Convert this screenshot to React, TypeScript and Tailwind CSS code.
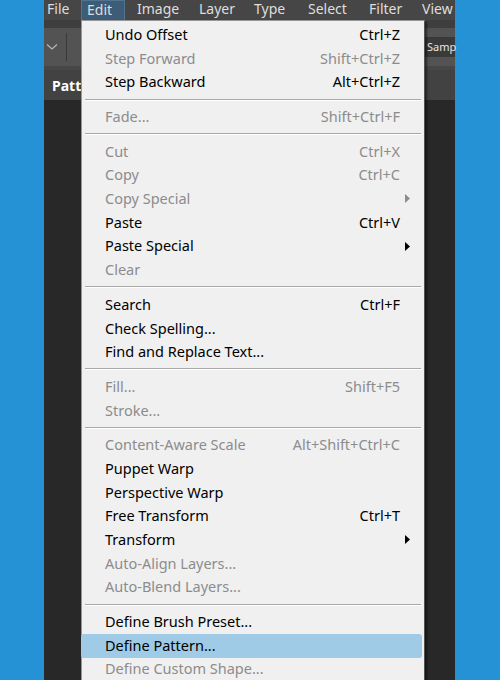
import React from "react";

type Item = {
  label?: string;
  shortcut?: string;
  disabled?: boolean;
  submenu?: boolean;
  active?: boolean;
  sep?: boolean;
};

const items: Item[] = [
  { label: "Undo Offset", shortcut: "Ctrl+Z" },
  { label: "Step Forward", shortcut: "Shift+Ctrl+Z", disabled: true },
  { label: "Step Backward", shortcut: "Alt+Ctrl+Z" },
  { sep: true },
  { label: "Fade...", shortcut: "Shift+Ctrl+F", disabled: true },
  { sep: true },
  { label: "Cut", shortcut: "Ctrl+X", disabled: true },
  { label: "Copy", shortcut: "Ctrl+C", disabled: true },
  { label: "Copy Special", disabled: true, submenu: true },
  { label: "Paste", shortcut: "Ctrl+V" },
  { label: "Paste Special", submenu: true },
  { label: "Clear", disabled: true },
  { sep: true },
  { label: "Search", shortcut: "Ctrl+F" },
  { label: "Check Spelling..." },
  { label: "Find and Replace Text..." },
  { sep: true },
  { label: "Fill...", shortcut: "Shift+F5", disabled: true },
  { label: "Stroke...", disabled: true },
  { sep: true },
  { label: "Content-Aware Scale", shortcut: "Alt+Shift+Ctrl+C", disabled: true },
  { label: "Puppet Warp" },
  { label: "Perspective Warp" },
  { label: "Free Transform", shortcut: "Ctrl+T" },
  { label: "Transform", submenu: true },
  { label: "Auto-Align Layers...", disabled: true },
  { label: "Auto-Blend Layers...", disabled: true },
  { sep: true },
  { label: "Define Brush Preset..." },
  { label: "Define Pattern...", active: true },
  { label: "Define Custom Shape...", disabled: true },
];

const topMenu = [
  { name: "File", cls: "w-[37px] pl-[3px]" },
  { name: "Edit", cls: "w-[44px] pl-[5px] bg-[#3d5c78] border border-[#4f7391] border-b-0" },
  { name: "Image", cls: "w-[62px] pl-[12px]" },
  { name: "Layer", cls: "w-[55px] pl-[12px]" },
  { name: "Type", cls: "w-[54px] pl-[12px]" },
  { name: "Select", cls: "w-[61px] pl-[12px]" },
  { name: "Filter", cls: "w-[53px] pl-[12px]" },
  { name: "View", cls: "w-[45px] pl-[12px]" },
];

const Arrow = ({ disabled }: { disabled?: boolean }) => (
  <svg width="5" height="9" viewBox="0 0 5 9" className="absolute right-[14px] top-[7px]">
    <path d="M0 0 L5 4.5 L0 9 Z" fill={disabled ? "#8c8c8c" : "#000"} />
  </svg>
);

export default function App() {
  return (
    <div
      className="relative w-[500px] h-[680px] bg-[#2592d6] flex overflow-hidden"
      style={{ fontFamily: '"Noto Sans", "Open Sans", sans-serif' }}
    >
      <div className="ml-[44px] w-[411px] h-full flex flex-col bg-[#282828]">
        {/* menu bar */}
        <div className="h-[20px] bg-[#464646] flex text-[14px] text-[#dedede] leading-[18px] whitespace-nowrap">
          {topMenu.map((m) => (
            <div key={m.name} className={`${m.cls} h-[20px] shrink-0`}>
              {m.name}
            </div>
          ))}
        </div>
        {/* options bar */}
        <div className="h-[8px] bg-[#3e3e3e]" />
        <div className="h-[38px] bg-[#535353] flex items-center">
          <svg width="12" height="8" viewBox="0 0 12 8" className="ml-[2px]">
            <path d="M1 1.5 L6 6 L11 1.5" stroke="#b5b5b5" strokeWidth="1.3" fill="none" />
          </svg>
          <div className="ml-[8px] w-px h-[28px] bg-[#3a3a3a]" />
          <div className="ml-auto w-[30px] h-[20px] bg-[#3a3a3a] text-[11px] text-[#e6e6e6] leading-[20px] pl-[2px] whitespace-nowrap">
            Samp
          </div>
        </div>
        <div className="h-[4px] bg-[#474747]" />
        {/* panel tab */}
        <div className="h-[30px] bg-[#424242] flex items-center pl-[8px] text-[14px] font-bold text-white">
          Patte
        </div>
        <div className="flex-1 bg-[#282828]" />
      </div>

      {/* dropdown */}
      <div className="absolute left-[81px] top-[20px] w-[344px] h-[680px] bg-[#f0f0f0] border border-[#979797] border-r-[#555] shadow-[2px_2px_2px_rgba(0,0,0,0.5)] pt-[2px] text-[14.5px]">
        {items.map((it, i) =>
          it.sep ? (
            <div key={i} className="h-[11px] flex items-center px-[3px]">
              <div className="w-full h-[2px] bg-[#a8a8a8] border-b border-[#ffffff]" />
            </div>
          ) : (
            <div
              key={i}
              className={`relative h-[23.7px] flex items-center pl-[23px] pr-[24px] whitespace-nowrap ${
                it.active ? "bg-[#9fcbe7] rounded-[3px] ml-[-1px] mr-[2px] pl-[24px]" : ""
              } ${it.disabled ? "text-[#8c8c8c]" : "text-black"}`}
            >
              <span>{it.label}</span>
              {it.shortcut && <span className="ml-auto">{it.shortcut}</span>}
              {it.submenu && <Arrow disabled={it.disabled} />}
            </div>
          )
        )}
      </div>
    </div>
  );
}
